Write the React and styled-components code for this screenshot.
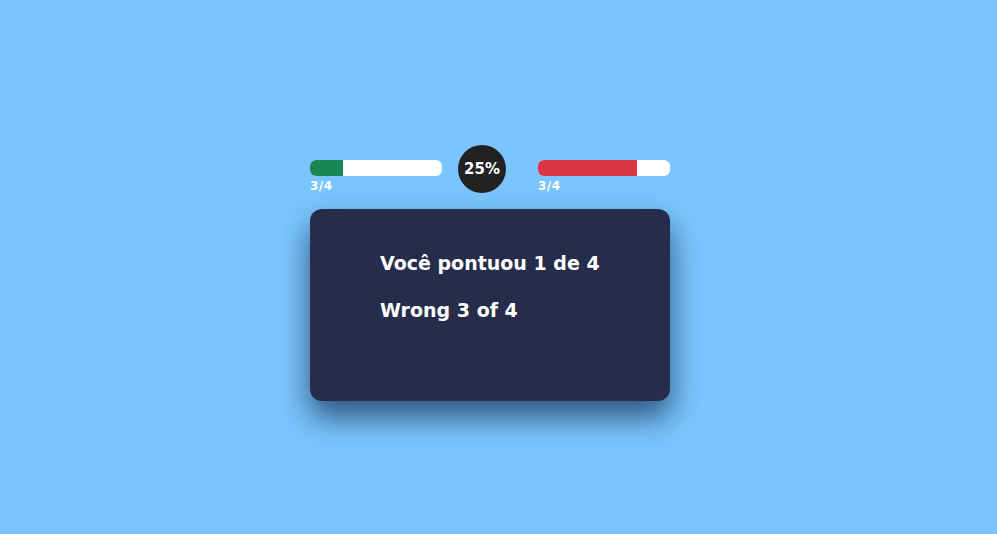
import React from "react";
import styled, { createGlobalStyle } from "styled-components";

const GlobalStyle = createGlobalStyle`
  body {
    margin: 8px;
    background: #7ac5fe;
    font-family: "DejaVu Sans", Verdana, sans-serif;
  }
`;

const result = { correct: 1, wrong: 3, total: 4 };

const App = () => {
  const percent = Math.round((result.correct / result.total) * 100);
  return (
    <>
      <GlobalStyle />
      <StyledPage>
        <StyledWrapper>
          <StyledHeader>
            <ProgressGroup
              fill={(result.correct / result.total) * 100}
              color="#198754"
              label={`${result.wrong}/${result.total}`}
            />
            <StyledCircle>{percent}%</StyledCircle>
            <ProgressGroup
              fill={(result.wrong / result.total) * 100}
              color="#dc3545"
              label={`${result.wrong}/${result.total}`}
              right
            />
          </StyledHeader>
          <StyledCard>
            <StyledLine>
              Você pontuou {result.correct} de {result.total}
            </StyledLine>
            <StyledLine>
              Wrong {result.wrong} of {result.total}
            </StyledLine>
          </StyledCard>
        </StyledWrapper>
      </StyledPage>
    </>
  );
};

const ProgressGroup = ({ fill, color, label, right }) => (
  <StyledGroup $right={right}>
    <StyledTrack>
      <StyledFill style={{ width: `${fill}%` }} $color={color} />
    </StyledTrack>
    <StyledLabel>{label}</StyledLabel>
  </StyledGroup>
);

const StyledPage = styled.div`
  height: 100vh;
  padding-right: 17px;
  display: flex;
  align-items: center;
  justify-content: center;
`;
const StyledWrapper = styled.div`
  width: 360px;
  display: flex;
  flex-direction: column;
  gap: 16px;
  margin-top: -4px;
`;
const StyledHeader = styled.div`
  display: flex;
  align-items: flex-end;
`;
const StyledGroup = styled.div`
  width: 132px;
  margin-left: ${(p) => (p.$right ? "32px" : "0")};
  margin-right: ${(p) => (p.$right ? "0" : "16px")};
  display: flex;
  flex-direction: column;
  gap: 4px;
`;
const StyledTrack = styled.div`
  height: 16px;
  background: #ffffff;
  border-radius: 6px;
  overflow: hidden;
`;
const StyledFill = styled.div`
  height: 100%;
  background: ${(p) => p.$color};
`;
const StyledLabel = styled.span`
  font-size: 12px;
  font-weight: 700;
  letter-spacing: 0.5px;
  color: #ffffff;
  line-height: 13px;
`;
const StyledCircle = styled.div`
  width: 48px;
  height: 48px;
  border-radius: 50%;
  background: #222222;
  color: #ffffff;
  font-size: 15px;
  font-weight: 700;
  display: flex;
  align-items: center;
  justify-content: center;
`;
const StyledCard = styled.div`
  height: 192px;
  box-sizing: border-box;
  padding: 43px 70px;
  background: #262d4a;
  border-radius: 12px;
  box-shadow: 0 16px 30px rgba(5, 25, 55, 0.65);
  display: flex;
  flex-direction: column;
  gap: 24px;
`;
const StyledLine = styled.p`
  margin: 0;
  font-size: 19px;
  font-weight: 700;
  line-height: 23px;
  white-space: nowrap;
  color: #ffffff;
`;

export default App;
